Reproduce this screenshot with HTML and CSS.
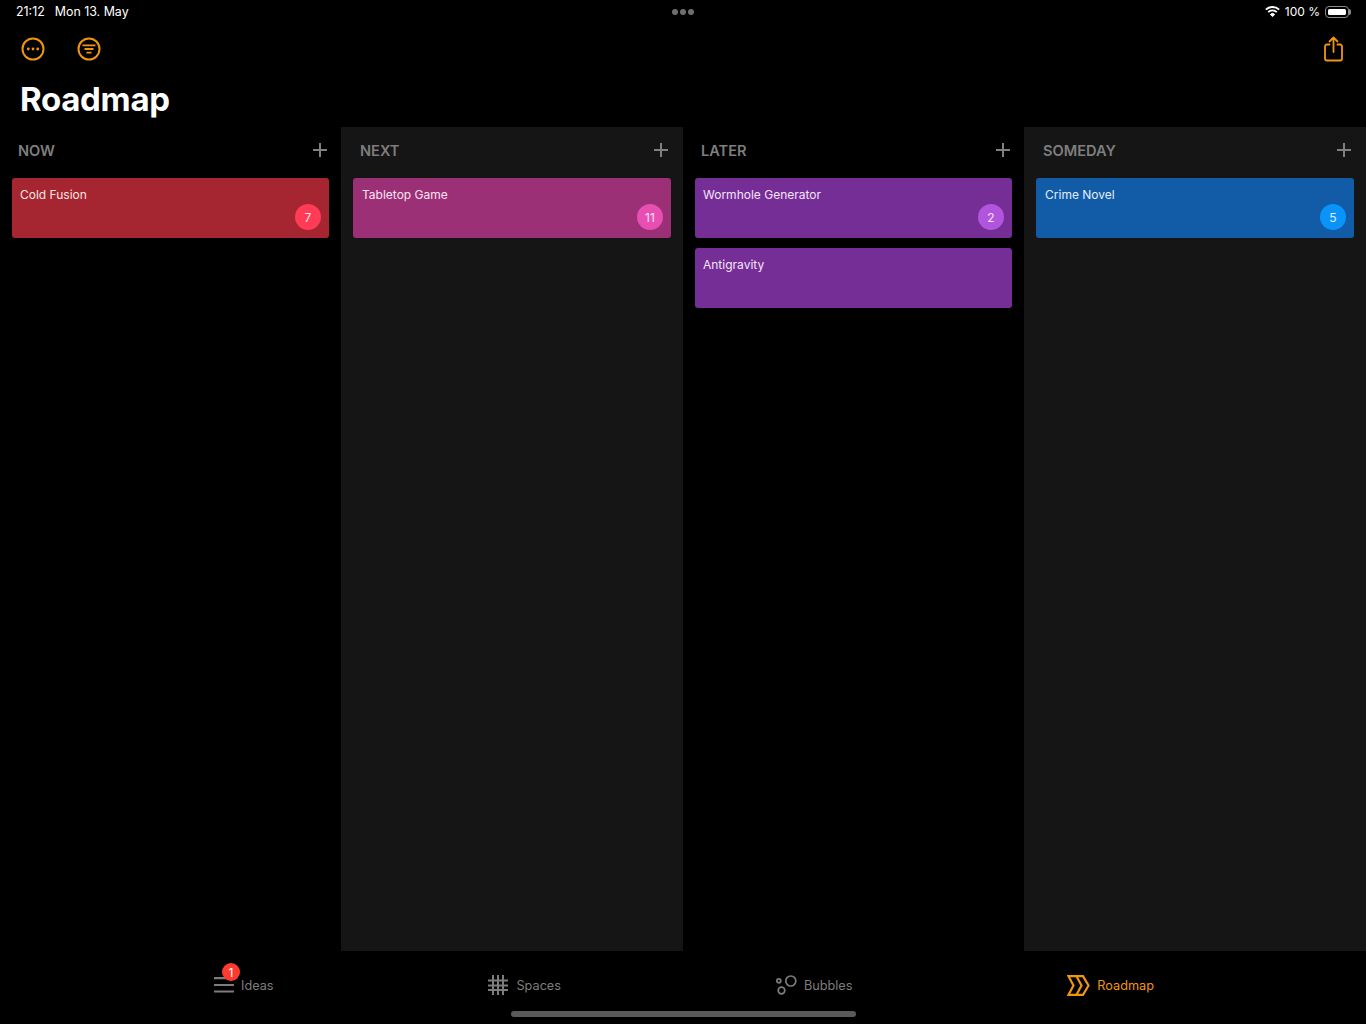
FILE: index.html
```html
<!DOCTYPE html>
<html lang="en">
<head>
    <meta charset="UTF-8">
    <meta name="viewport" content="width=device-width, initial-scale=1.0">
    <title>Roadmap</title>
    <link rel="stylesheet" href="styles.css">
</head>
<body>

    <div class="app">
        <!-- Status bar -->
        <div class="status-bar">
            <div class="status-left">
                <span>21:12</span>
                <span>Mon 13. May</span>
            </div>
            <div class="status-dots"><i></i><i></i><i></i></div>
            <div class="status-right">
                <svg width="15" height="11" viewBox="0 0 15 11" fill="none" stroke="#fff" stroke-width="1.800">
                    <path d="M.8 3.700A9.600 9.600 0 0 1 14.200 3.700"/>
                    <path d="M3.200 6.200A6.100 6.100 0 0 1 11.800 6.200"/>
                    <path d="M5.300 8.500A3 3 0 0 1 9.700 8.500L7.500 10.500Z" fill="#fff" stroke-width="1"/>
                </svg>
                <span>100 %</span>
                <div class="battery"><div class="battery-level"></div></div>
            </div>
        </div>

        <!-- Toolbar and title -->
        <div class="toolbar">
            <div class="toolbar-left">
                <svg width="24" height="24" viewBox="0 0 24 24" fill="none" stroke="#f0960e" stroke-width="2">
                    <circle cx="12" cy="12" r="10.500"/>
                    <circle cx="7.300" cy="12" r="1.400" fill="#f0960e" stroke="none"/>
                    <circle cx="12" cy="12" r="1.400" fill="#f0960e" stroke="none"/>
                    <circle cx="16.700" cy="12" r="1.400" fill="#f0960e" stroke="none"/>
                </svg>
                <svg width="24" height="24" viewBox="0 0 24 24" fill="none" stroke="#f0960e" stroke-width="2">
                    <circle cx="12" cy="12" r="10.500"/>
                    <path d="M5.500 8.300h13M7.500 12h9M9.500 15.700h5" stroke-width="1.800"/>
                </svg>
            </div>
            <svg width="22" height="26" viewBox="0 0 22 26" fill="none" stroke="#f0960e" stroke-width="1.800" stroke-linecap="round" stroke-linejoin="round">
                <path d="M7.500 8.500H5C3.700 8.500 3 9.200 3 10.500V22.500C3 23.800 3.700 24.500 5 24.500H18C19.300 24.500 20 23.800 20 22.500V10.500C20 9.200 19.300 8.500 18 8.500H15.500"/>
                <path d="M11.500 16V1.500M7.500 5.500L11.500 1.500L15.500 5.500"/>
            </svg>
        </div>
        <h1 class="page-title">Roadmap</h1>

        <!-- Board -->
        <div class="board">
            <div class="column">
                <div class="column-header">
                    <span class="column-title">NOW</span>
                    <span class="add-button"></span>
                </div>
                <div class="card card-red">
                    <div class="card-title">Cold Fusion</div>
                    <div class="card-count">7</div>
                </div>
            </div>
            <div class="column column-alt">
                <div class="column-header">
                    <span class="column-title">NEXT</span>
                    <span class="add-button"></span>
                </div>
                <div class="card card-pink">
                    <div class="card-title">Tabletop Game</div>
                    <div class="card-count">11</div>
                </div>
            </div>
            <div class="column">
                <div class="column-header">
                    <span class="column-title">LATER</span>
                    <span class="add-button"></span>
                </div>
                <div class="card card-purple">
                    <div class="card-title">Wormhole Generator</div>
                    <div class="card-count">2</div>
                </div>
                <div class="card card-purple">
                    <div class="card-title">Antigravity</div>
                </div>
            </div>
            <div class="column column-alt">
                <div class="column-header">
                    <span class="column-title">SOMEDAY</span>
                    <span class="add-button"></span>
                </div>
                <div class="card card-blue">
                    <div class="card-title">Crime Novel</div>
                    <div class="card-count">5</div>
                </div>
            </div>
        </div>

        <!-- Tab bar -->
        <div class="tab-bar">
            <div class="tab">
                <svg width="20" height="16" viewBox="0 0 20 16" fill="none" stroke="#7d7d7d" stroke-width="2.200">
                    <path d="M0 1.200h20M0 8h20M0 14.500h20"/>
                </svg>
                <span>Ideas</span>
                <div class="tab-badge">1</div>
            </div>
            <div class="tab tab-spaces">
                <svg width="20" height="20" viewBox="0 0 20 20" fill="none" stroke="#7d7d7d" stroke-width="2">
                    <path d="M0 5.500h20M0 10.500h20M0 15h20M5 0v20M10 0v20M15 0v20"/>
                </svg>
                <span>Spaces</span>
            </div>
            <div class="tab">
                <svg width="21" height="20" viewBox="0 0 21 20" fill="none" stroke="#7d7d7d" stroke-width="1.700">
                    <circle cx="14.800" cy="6" r="5"/>
                    <circle cx="2.800" cy="5.800" r="2"/>
                    <circle cx="5.500" cy="15.500" r="3.300"/>
                </svg>
                <span>Bubbles</span>
            </div>
            <div class="tab tab-active">
                <svg width="23" height="21" viewBox="0 0 23 21" fill="none" stroke="#f0960e" stroke-width="2.200">
                    <path d="M1.500 1.200H16L21.500 10.500L16 19.800H1.500L6.500 10.500Z"/>
                    <path d="M9.500 1.200L14.500 10.500L9.500 19.800"/>
                </svg>
                <span>Roadmap</span>
            </div>
        </div>
        <div class="home-indicator"></div>
    </div>

</body>
</html>
```

FILE: styles.css
```css
* {
    box-sizing: border-box;
}

body {
    margin: 0;
    background-color: #000;
    font-family: Inter, "Liberation Sans", sans-serif;
    color: #fff;
}

.app {
    position: relative;
    display: flex;
    flex-direction: column;
    height: 1024px;
    overflow: hidden;
}

.status-bar {
    position: relative;
    display: flex;
    justify-content: space-between;
    align-items: center;
    height: 23px;
    padding: 0 15px 0 16px;
    font-size: 12.400px;
}

.status-left {
    display: flex;
    gap: 10px;
}

.status-dots {
    position: absolute;
    left: 672px;
    top: 9px;
    display: flex;
    gap: 2px;
}

.status-dots i {
    width: 6px;
    height: 6px;
    border-radius: 50%;
    background-color: #6e6e6e;
}

.status-right {
    display: flex;
    align-items: center;
    gap: 5px;
    font-size: 12px;
}

.battery {
    position: relative;
    width: 24px;
    height: 12px;
    margin-right: 2px;
    padding: 2px;
    border: 1px solid #8a8a8a;
    border-radius: 4px;
}

.battery::after {
    content: "";
    position: absolute;
    left: 23px;
    top: 2px;
    width: 2px;
    height: 6px;
    border-radius: 0 2px 2px 0;
    background-color: #8a8a8a;
}

.battery-level {
    height: 100%;
    border-radius: 1.500px;
    background-color: #fff;
}

.toolbar {
    display: flex;
    justify-content: space-between;
    align-items: center;
    height: 36px;
    margin-top: 8px;
    padding: 0 22px 0 21px;
}

.toolbar-left {
    display: flex;
    gap: 32px;
}

.page-title {
    margin: 0;
    height: 60px;
    padding: 12px 0 0 20px;
    font-size: 33px;
    font-weight: 700;
    line-height: 40px;
    letter-spacing: -0.300px;
}

.board {
    display: grid;
    grid-template-columns: 341px 342px 341px 342px;
    height: 824px;
}

.column {
    padding: 0 12px;
}

.column-alt {
    background-color: #151515;
}

.column-header {
    display: flex;
    justify-content: space-between;
    align-items: center;
    height: 51px;
    padding: 0 2px 3px 6px;
}

.column-alt .column-header {
    padding-left: 7px;
    padding-right: 3px;
}

.column-title {
    font-size: 14.600px;
    font-weight: 600;
    color: #7e7e7e;
}

.add-button {
    width: 14px;
    height: 14px;
    margin-bottom: 2px;
    background:
        linear-gradient(#808080, #808080) center / 14px 2px no-repeat,
        linear-gradient(#808080, #808080) center / 2px 14px no-repeat;
}

.card {
    position: relative;
    height: 60px;
    margin-bottom: 10px;
    padding: 8px 8px;
    border-radius: 3px;
}

.column-alt .card {
    padding-left: 9px;
}

.card-title {
    font-size: 12px;
    line-height: 17px;
}

.card-count {
    position: absolute;
    right: 8px;
    bottom: 8px;
    display: flex;
    justify-content: center;
    align-items: center;
    width: 26px;
    height: 26px;
    border-radius: 50%;
    font-size: 12px;
}

.card-red {
    background-color: #a52530;
    color: #fbe4e6;
}

.card-red .card-count {
    background-color: #ff3b56;
}

.card-pink {
    background-color: #9b3076;
    color: #fbe4f3;
}

.card-pink .card-count {
    background-color: #e84fb3;
}

.card-purple {
    background-color: #752e96;
    color: #f5e4fb;
}

.card-purple .card-count {
    background-color: #b155de;
}

.card-blue {
    background-color: #125ba6;
    color: #e2effb;
}

.card-blue .card-count {
    background-color: #0a94fa;
}

.tab-bar {
    flex: 1;
    display: flex;
    justify-content: space-between;
    align-items: flex-start;
    padding: 24px 212px 0 214px;
}

.tab {
    position: relative;
    display: flex;
    align-items: center;
    gap: 7px;
    height: 20px;
    font-size: 12.700px;
    color: #7d7d7d;
}

.tab-spaces {
    gap: 8px;
}

.tab-active {
    color: #f0960e;
}

.tab-badge {
    position: absolute;
    left: 8px;
    top: -12px;
    display: flex;
    justify-content: center;
    align-items: center;
    width: 18px;
    height: 18px;
    border-radius: 50%;
    background-color: #ff3b30;
    color: #fff;
    font-size: 12px;
}

.home-indicator {
    position: absolute;
    left: 511px;
    bottom: 7px;
    width: 345px;
    height: 6px;
    border-radius: 3px;
    background-color: #5a5a5a;
}
```
